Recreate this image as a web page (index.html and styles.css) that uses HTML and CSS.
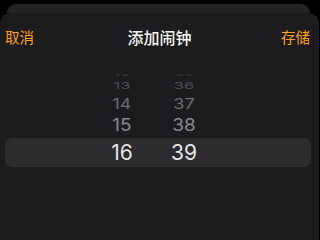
FILE: index.html
```html
<!DOCTYPE html>
<html lang="zh">
<head>
<meta charset="utf-8">
<link rel="stylesheet" href="styles.css">
</head>
<body>
<div class="screen">
  <div class="backcard"></div>
  <div class="sheet">
    <div class="header">
      <span class="btn">取消</span>
      <span class="title">添加闹钟</span>
      <span class="btn">存储</span>
    </div>
    <div class="picker">
      <div class="row r0"><span>12</span><span>35</span></div>
      <div class="row r1"><span>13</span><span>36</span></div>
      <div class="row r2"><span>14</span><span>37</span></div>
      <div class="row r3"><span>15</span><span>38</span></div>
      <div class="row sel"><span>16</span><span>39</span></div>
    </div>
  </div>
</div>
</body>
</html>
```
FILE: styles.css
```css
html, body {
  margin: 0;
  padding: 0;
  background: #000;
}
.screen {
  width: 319px;
  height: 240px;
  display: flex;
  flex-direction: column;
  padding-top: 4px;
  box-sizing: border-box;
  overflow: hidden;
}
.backcard {
  height: 9px;
  margin: 0 9px 0 7px;
  background: #232325;
  border-radius: 10px 10px 0 0;
  flex: none;
}
.sheet {
  flex: 1;
  background: #1c1c1e;
  border-radius: 10px 10px 0 0;
  display: flex;
  flex-direction: column;
}
.header {
  height: 48px;
  display: flex;
  align-items: center;
  justify-content: space-between;
  padding: 0 9px 0 5px;
  font-family: "Noto Sans CJK SC", "Noto Sans", sans-serif;
  flex: none;
}
.btn {
  color: #ff9f0a;
  font-size: 14.5px;
  line-height: 20px;
}
.title {
  color: #f2f2f2;
  font-size: 16px;
  line-height: 20px;
  font-weight: 500;
  margin-left: 4px;
}
.picker {
  margin-top: 10px;
  display: flex;
  flex-direction: column;
  font-family: "Inter", "Liberation Sans", sans-serif;
}
.row {
  display: grid;
  grid-template-columns: 40px 40px;
  column-gap: 22px;
  padding-left: 102px;
  align-items: center;
  justify-items: center;
}
.row span {
  display: block;
}
.r0 {
  height: 9px;
  line-height: 9px;
  color: #3c3c3e;
  font-size: 16px;
}
.r0 span {
  transform: scaleY(0.15);
}
.r1 {
  height: 13px;
  line-height: 13px;
  color: #4e4e50;
  font-size: 16.5px;
}
.r1 span {
  transform: scaleY(0.5);
}
.r2 {
  height: 21px;
  line-height: 21px;
  color: #6b6b6d;
  font-size: 18px;
}
.r2 span {
  transform: scaleY(0.78);
}
.r3 {
  height: 24px;
  line-height: 24px;
  color: #88888a;
  font-size: 19px;
}
.r3 span {
  transform: scaleY(0.9);
}
.sel {
  height: 29px;
  line-height: 29px;
  margin: 0 8px 0 5px;
  padding-left: 97px;
  background: #2c2c2e;
  border-radius: 7px;
  color: #e3e3e5;
  font-size: 21px;
}
```
